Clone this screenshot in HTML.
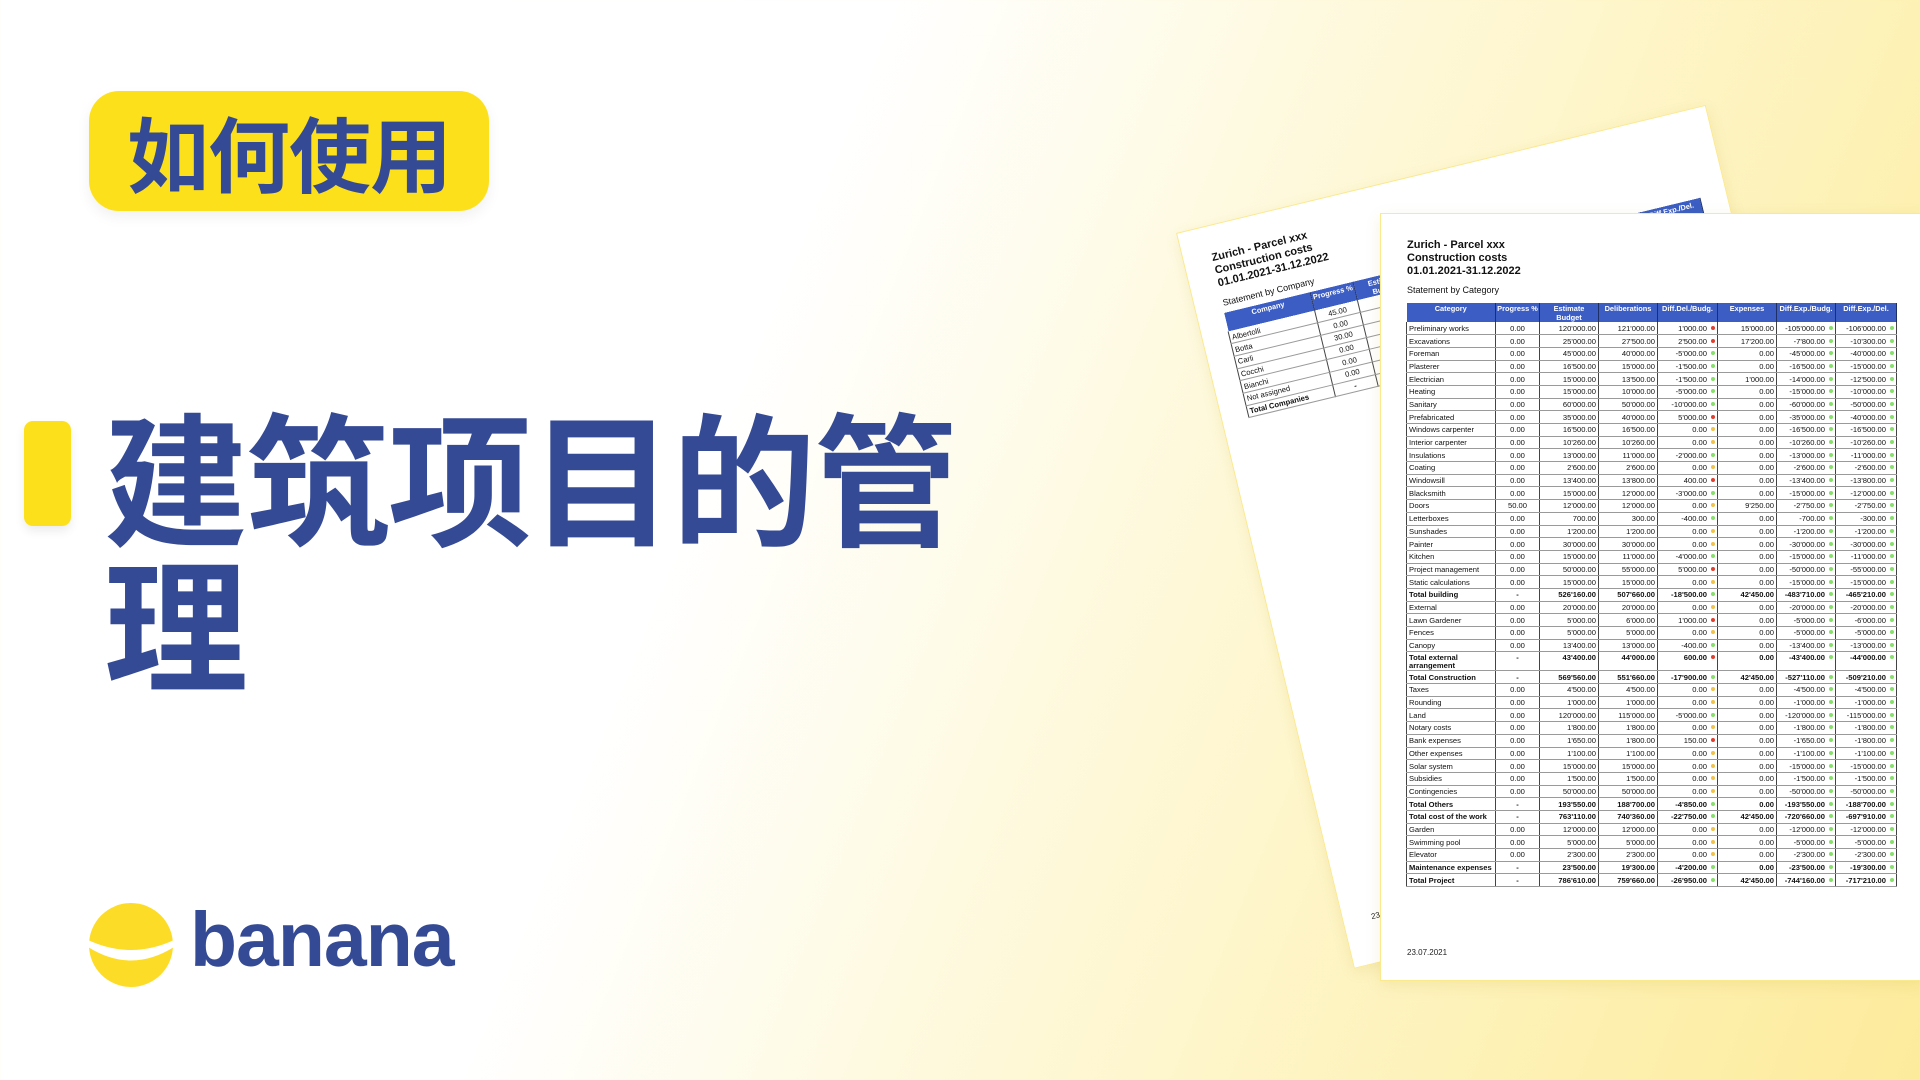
<!DOCTYPE html>
<html><head><meta charset="utf-8">
<style>
*{margin:0;padding:0;box-sizing:border-box}
body{width:1920px;height:1080px;overflow:hidden;position:relative;font-family:"Liberation Sans","Noto Sans CJK SC",sans-serif;background:linear-gradient(112deg,#ffffff 0%,#ffffff 38%,#fef9dc 58%,#fdf0b0 85%,#fdeb9c 100%)}
.pill{position:absolute;left:89px;top:91px;width:400px;height:120px;background:#fde01c;border-radius:30px;box-shadow:0 6px 14px rgba(0,0,0,.06);color:#354a94;font-family:"Noto Sans CJK SC",sans-serif;font-weight:700;font-size:82px;line-height:120px;text-align:center;letter-spacing:-1px}
.bar{position:absolute;left:24px;top:421px;width:47px;height:105px;background:#fde01c;border-radius:9px;box-shadow:0 5px 10px rgba(0,0,0,.08)}
.title{position:absolute;left:104px;top:400px;width:900px;color:#354a94;font-family:"Noto Sans CJK SC",sans-serif;font-weight:700;font-size:144px;line-height:146px;letter-spacing:-2px}
.logo{position:absolute;left:88px;top:902px}
.brand{position:absolute;left:190px;top:895px;color:#354a94;font-family:"Liberation Sans",sans-serif;font-weight:700;font-size:77px;letter-spacing:-1px;line-height:90px}
.page{position:absolute;background:#fff;border:1.5px solid #fbe98e;box-shadow:0 4px 14px rgba(180,150,0,.12)}
.p1{left:1380px;top:213px;width:545px;height:768px}
.p2{left:1176px;top:233px;width:545px;height:757px;transform-origin:0 0;transform:rotate(-13.6deg)}
.h{position:absolute;font-weight:700;font-size:11px;line-height:13px;color:#111}
.s{position:absolute;font-size:9px;color:#111}
table{position:absolute;border-collapse:collapse;font-size:7.6px;color:#111;table-layout:fixed}
th{background:#3b5dc4;color:#fff;font-weight:700;font-size:7.4px;line-height:8.5px;vertical-align:top;padding:2px 0 0;border-right:1px solid #1e2f66;height:19px;white-space:nowrap;overflow:hidden}
th.w{white-space:normal}
td{height:12.7px;line-height:11px;border-bottom:1px solid #9a9a9a;border-right:1px solid #444;padding:0 2px;text-align:right;white-space:nowrap;overflow:hidden}
td:first-child{text-align:left;border-left:1px solid #444}
td:nth-child(2){text-align:center}
td.r::after,td.g::after,td.y::after{content:"";display:inline-block;width:4px;height:4px;border-radius:50%;margin-left:4px;vertical-align:1px}
td.r::after{background:#e2402f}td.g::after{background:#86e06a}td.y::after{background:#f3c24a}
tr.b td{font-weight:700}
tr.dd td{height:19px;line-height:8px;vertical-align:top;padding-top:2px}
.date{position:absolute;font-size:8px;color:#222}
</style></head><body>
<div class="pill">如何使用</div>
<div class="bar"></div>
<div class="title">建筑项目的管<br>理</div>
<svg class="logo" width="86" height="86" viewBox="0 0 86 86"><circle cx="43" cy="43" r="42" fill="#fddc27"/><path d="M0 38 Q43 58 86 38 L86 45 Q43 72 0 45 Z" fill="#fff"/></svg>
<div class="brand">banana</div>

<div class="page p2">
<div class="h" style="left:28px;top:26px">Zurich - Parcel xxx<br>Construction costs<br>01.01.2021-31.12.2022</div>
<div class="s" style="left:28px;top:73px">Statement by Company</div>
<table style="left:26px;top:88px;width:490px">
<colgroup><col style="width:89px"><col style="width:44px"><col style="width:59px"><col style="width:59px"><col style="width:60px"><col style="width:59px"><col style="width:59px"><col style="width:61px"></colgroup>
<tr><th>Company</th><th>Progress %</th><th class="w">Estimate Budget</th><th>Deliberations</th><th>Diff.Del./Budg.</th><th>Expenses</th><th>Diff.Exp./Budg.</th><th>Diff.Exp./Del.</th></tr>
<tr><td>Albertolli</td><td>45.00</td><td></td><td></td><td></td><td></td><td></td><td class="g">0.00</td></tr>
<tr><td>Botta</td><td>0.00</td><td></td><td></td><td></td><td></td><td></td><td></td></tr>
<tr><td>Carli</td><td>30.00</td><td></td><td></td><td></td><td></td><td></td><td></td></tr>
<tr><td>Cocchi</td><td>0.00</td><td></td><td></td><td></td><td></td><td></td><td></td></tr>
<tr><td>Bianchi</td><td>0.00</td><td></td><td></td><td></td><td></td><td></td><td></td></tr>
<tr><td>Not assigned</td><td>0.00</td><td></td><td></td><td></td><td></td><td></td><td></td></tr>
<tr class="b"><td>Total Companies</td><td>-</td><td></td><td></td><td></td><td></td><td></td><td></td></tr>
</table>
<div class="date" style="left:28px;top:705px">23.07.2021</div>
</div>

<div class="page p1">
<div class="h" style="left:26px;top:25px">Zurich - Parcel xxx<br>Construction costs<br>01.01.2021-31.12.2022</div>
<div class="s" style="left:26px;top:71px">Statement by Category</div>
<table style="left:25px;top:89px;width:490px">
<colgroup><col style="width:89px"><col style="width:44px"><col style="width:59px"><col style="width:59px"><col style="width:60px"><col style="width:59px"><col style="width:59px"><col style="width:61px"></colgroup>
<tr><th>Category</th><th>Progress %</th><th class="w">Estimate Budget</th><th>Deliberations</th><th>Diff.Del./Budg.</th><th>Expenses</th><th>Diff.Exp./Budg.</th><th>Diff.Exp./Del.</th></tr>
<tr><td>Preliminary works</td><td>0.00</td><td>120'000.00</td><td>121'000.00</td><td class="r">1'000.00</td><td>15'000.00</td><td class="g">-105'000.00</td><td class="g">-106'000.00</td></tr>
<tr><td>Excavations</td><td>0.00</td><td>25'000.00</td><td>27'500.00</td><td class="r">2'500.00</td><td>17'200.00</td><td class="g">-7'800.00</td><td class="g">-10'300.00</td></tr>
<tr><td>Foreman</td><td>0.00</td><td>45'000.00</td><td>40'000.00</td><td class="g">-5'000.00</td><td>0.00</td><td class="g">-45'000.00</td><td class="g">-40'000.00</td></tr>
<tr><td>Plasterer</td><td>0.00</td><td>16'500.00</td><td>15'000.00</td><td class="g">-1'500.00</td><td>0.00</td><td class="g">-16'500.00</td><td class="g">-15'000.00</td></tr>
<tr><td>Electrician</td><td>0.00</td><td>15'000.00</td><td>13'500.00</td><td class="g">-1'500.00</td><td>1'000.00</td><td class="g">-14'000.00</td><td class="g">-12'500.00</td></tr>
<tr><td>Heating</td><td>0.00</td><td>15'000.00</td><td>10'000.00</td><td class="g">-5'000.00</td><td>0.00</td><td class="g">-15'000.00</td><td class="g">-10'000.00</td></tr>
<tr><td>Sanitary</td><td>0.00</td><td>60'000.00</td><td>50'000.00</td><td class="g">-10'000.00</td><td>0.00</td><td class="g">-60'000.00</td><td class="g">-50'000.00</td></tr>
<tr><td>Prefabricated</td><td>0.00</td><td>35'000.00</td><td>40'000.00</td><td class="r">5'000.00</td><td>0.00</td><td class="g">-35'000.00</td><td class="g">-40'000.00</td></tr>
<tr><td>Windows carpenter</td><td>0.00</td><td>16'500.00</td><td>16'500.00</td><td class="y">0.00</td><td>0.00</td><td class="g">-16'500.00</td><td class="g">-16'500.00</td></tr>
<tr><td>Interior carpenter</td><td>0.00</td><td>10'260.00</td><td>10'260.00</td><td class="y">0.00</td><td>0.00</td><td class="g">-10'260.00</td><td class="g">-10'260.00</td></tr>
<tr><td>Insulations</td><td>0.00</td><td>13'000.00</td><td>11'000.00</td><td class="g">-2'000.00</td><td>0.00</td><td class="g">-13'000.00</td><td class="g">-11'000.00</td></tr>
<tr><td>Coating</td><td>0.00</td><td>2'600.00</td><td>2'600.00</td><td class="y">0.00</td><td>0.00</td><td class="g">-2'600.00</td><td class="g">-2'600.00</td></tr>
<tr><td>Windowsill</td><td>0.00</td><td>13'400.00</td><td>13'800.00</td><td class="r">400.00</td><td>0.00</td><td class="g">-13'400.00</td><td class="g">-13'800.00</td></tr>
<tr><td>Blacksmith</td><td>0.00</td><td>15'000.00</td><td>12'000.00</td><td class="g">-3'000.00</td><td>0.00</td><td class="g">-15'000.00</td><td class="g">-12'000.00</td></tr>
<tr><td>Doors</td><td>50.00</td><td>12'000.00</td><td>12'000.00</td><td class="y">0.00</td><td>9'250.00</td><td class="g">-2'750.00</td><td class="g">-2'750.00</td></tr>
<tr><td>Letterboxes</td><td>0.00</td><td>700.00</td><td>300.00</td><td class="g">-400.00</td><td>0.00</td><td class="g">-700.00</td><td class="g">-300.00</td></tr>
<tr><td>Sunshades</td><td>0.00</td><td>1'200.00</td><td>1'200.00</td><td class="y">0.00</td><td>0.00</td><td class="g">-1'200.00</td><td class="g">-1'200.00</td></tr>
<tr><td>Painter</td><td>0.00</td><td>30'000.00</td><td>30'000.00</td><td class="y">0.00</td><td>0.00</td><td class="g">-30'000.00</td><td class="g">-30'000.00</td></tr>
<tr><td>Kitchen</td><td>0.00</td><td>15'000.00</td><td>11'000.00</td><td class="g">-4'000.00</td><td>0.00</td><td class="g">-15'000.00</td><td class="g">-11'000.00</td></tr>
<tr><td>Project management</td><td>0.00</td><td>50'000.00</td><td>55'000.00</td><td class="r">5'000.00</td><td>0.00</td><td class="g">-50'000.00</td><td class="g">-55'000.00</td></tr>
<tr><td>Static calculations</td><td>0.00</td><td>15'000.00</td><td>15'000.00</td><td class="y">0.00</td><td>0.00</td><td class="g">-15'000.00</td><td class="g">-15'000.00</td></tr>
<tr class="b"><td>Total building</td><td>-</td><td>526'160.00</td><td>507'660.00</td><td class="g">-18'500.00</td><td>42'450.00</td><td class="g">-483'710.00</td><td class="g">-465'210.00</td></tr>
<tr><td>External</td><td>0.00</td><td>20'000.00</td><td>20'000.00</td><td class="y">0.00</td><td>0.00</td><td class="g">-20'000.00</td><td class="g">-20'000.00</td></tr>
<tr><td>Lawn Gardener</td><td>0.00</td><td>5'000.00</td><td>6'000.00</td><td class="r">1'000.00</td><td>0.00</td><td class="g">-5'000.00</td><td class="g">-6'000.00</td></tr>
<tr><td>Fences</td><td>0.00</td><td>5'000.00</td><td>5'000.00</td><td class="y">0.00</td><td>0.00</td><td class="g">-5'000.00</td><td class="g">-5'000.00</td></tr>
<tr><td>Canopy</td><td>0.00</td><td>13'400.00</td><td>13'000.00</td><td class="g">-400.00</td><td>0.00</td><td class="g">-13'400.00</td><td class="g">-13'000.00</td></tr>
<tr class="b dd"><td style="white-space:normal">Total external arrangement</td><td>-</td><td>43'400.00</td><td>44'000.00</td><td class="r">600.00</td><td>0.00</td><td class="g">-43'400.00</td><td class="g">-44'000.00</td></tr>
<tr class="b"><td>Total Construction</td><td>-</td><td>569'560.00</td><td>551'660.00</td><td class="g">-17'900.00</td><td>42'450.00</td><td class="g">-527'110.00</td><td class="g">-509'210.00</td></tr>
<tr><td>Taxes</td><td>0.00</td><td>4'500.00</td><td>4'500.00</td><td class="y">0.00</td><td>0.00</td><td class="g">-4'500.00</td><td class="g">-4'500.00</td></tr>
<tr><td>Rounding</td><td>0.00</td><td>1'000.00</td><td>1'000.00</td><td class="y">0.00</td><td>0.00</td><td class="g">-1'000.00</td><td class="g">-1'000.00</td></tr>
<tr><td>Land</td><td>0.00</td><td>120'000.00</td><td>115'000.00</td><td class="g">-5'000.00</td><td>0.00</td><td class="g">-120'000.00</td><td class="g">-115'000.00</td></tr>
<tr><td>Notary costs</td><td>0.00</td><td>1'800.00</td><td>1'800.00</td><td class="y">0.00</td><td>0.00</td><td class="g">-1'800.00</td><td class="g">-1'800.00</td></tr>
<tr><td>Bank expenses</td><td>0.00</td><td>1'650.00</td><td>1'800.00</td><td class="r">150.00</td><td>0.00</td><td class="g">-1'650.00</td><td class="g">-1'800.00</td></tr>
<tr><td>Other expenses</td><td>0.00</td><td>1'100.00</td><td>1'100.00</td><td class="y">0.00</td><td>0.00</td><td class="g">-1'100.00</td><td class="g">-1'100.00</td></tr>
<tr><td>Solar system</td><td>0.00</td><td>15'000.00</td><td>15'000.00</td><td class="y">0.00</td><td>0.00</td><td class="g">-15'000.00</td><td class="g">-15'000.00</td></tr>
<tr><td>Subsidies</td><td>0.00</td><td>1'500.00</td><td>1'500.00</td><td class="y">0.00</td><td>0.00</td><td class="g">-1'500.00</td><td class="g">-1'500.00</td></tr>
<tr><td>Contingencies</td><td>0.00</td><td>50'000.00</td><td>50'000.00</td><td class="y">0.00</td><td>0.00</td><td class="g">-50'000.00</td><td class="g">-50'000.00</td></tr>
<tr class="b"><td>Total Others</td><td>-</td><td>193'550.00</td><td>188'700.00</td><td class="g">-4'850.00</td><td>0.00</td><td class="g">-193'550.00</td><td class="g">-188'700.00</td></tr>
<tr class="b"><td>Total cost of the work</td><td>-</td><td>763'110.00</td><td>740'360.00</td><td class="g">-22'750.00</td><td>42'450.00</td><td class="g">-720'660.00</td><td class="g">-697'910.00</td></tr>
<tr><td>Garden</td><td>0.00</td><td>12'000.00</td><td>12'000.00</td><td class="y">0.00</td><td>0.00</td><td class="g">-12'000.00</td><td class="g">-12'000.00</td></tr>
<tr><td>Swimming pool</td><td>0.00</td><td>5'000.00</td><td>5'000.00</td><td class="y">0.00</td><td>0.00</td><td class="g">-5'000.00</td><td class="g">-5'000.00</td></tr>
<tr><td>Elevator</td><td>0.00</td><td>2'300.00</td><td>2'300.00</td><td class="y">0.00</td><td>0.00</td><td class="g">-2'300.00</td><td class="g">-2'300.00</td></tr>
<tr class="b"><td>Maintenance expenses</td><td>-</td><td>23'500.00</td><td>19'300.00</td><td class="g">-4'200.00</td><td>0.00</td><td class="g">-23'500.00</td><td class="g">-19'300.00</td></tr>
<tr class="b"><td>Total Project</td><td>-</td><td>786'610.00</td><td>759'660.00</td><td class="g">-26'950.00</td><td>42'450.00</td><td class="g">-744'160.00</td><td class="g">-717'210.00</td></tr>
</table>
<div class="date" style="left:26px;top:734px">23.07.2021</div>
</div>
</body></html>
